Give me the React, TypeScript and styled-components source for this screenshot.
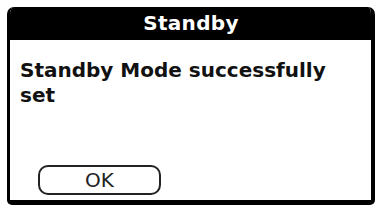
import React from "react";
import styled, { createGlobalStyle } from "styled-components";

const Global = createGlobalStyle`
  html, body { margin: 0; padding: 0; background: #ffffff; }
  body { font-family: "DejaVu Sans", "Liberation Sans", sans-serif; }
`;

const Page = styled.div`
  width: 379px;
  height: 209px;
  padding: 7px 4px 4px 7px;
  box-sizing: border-box;
`;

const Dialog = styled.div`
  width: 368px;
  height: 198px;
  box-sizing: border-box;
  display: flex;
  flex-direction: column;
  border-left: 3px solid #000;
  border-right: 4px solid #000;
  border-bottom: 5px solid #000;
  border-radius: 7px 7px 5px 5px;
  background: #fff;
  overflow: hidden;
`;

const TitleBar = styled.div`
  height: 33px;
  background: #000;
  color: #fff;
  display: flex;
  align-items: center;
  justify-content: center;
  font-weight: bold;
  font-size: 20px;
  letter-spacing: 0.3px;
  margin: 0 -4px 0 -3px;
  padding-bottom: 1px;
  box-sizing: border-box;
`;

const Body = styled.div`
  flex: 1;
  display: flex;
  flex-direction: column;
  padding: 18px 10px 5px 10px;
`;

const Message = styled.div`
  font-weight: bold;
  font-size: 20px;
  line-height: 25px;
  color: #111;
  flex: 1;
`;

const Button = styled.button`
  align-self: flex-start;
  margin-left: 18px;
  width: 123px;
  height: 30px;
  border: 2px solid #222;
  border-radius: 10px;
  background: #fff;
  font-family: "DejaVu Sans", sans-serif;
  font-size: 20px;
  color: #222;
  padding: 0;
  display: flex;
  align-items: center;
  justify-content: center;
`;

export default function App() {
  return (
    <>
      <Global />
      <Page>
        <Dialog>
          <TitleBar>Standby</TitleBar>
          <Body>
            <Message>
              Standby Mode successfully
              <br />
              set
            </Message>
            <Button>OK</Button>
          </Body>
        </Dialog>
      </Page>
    </>
  );
}
